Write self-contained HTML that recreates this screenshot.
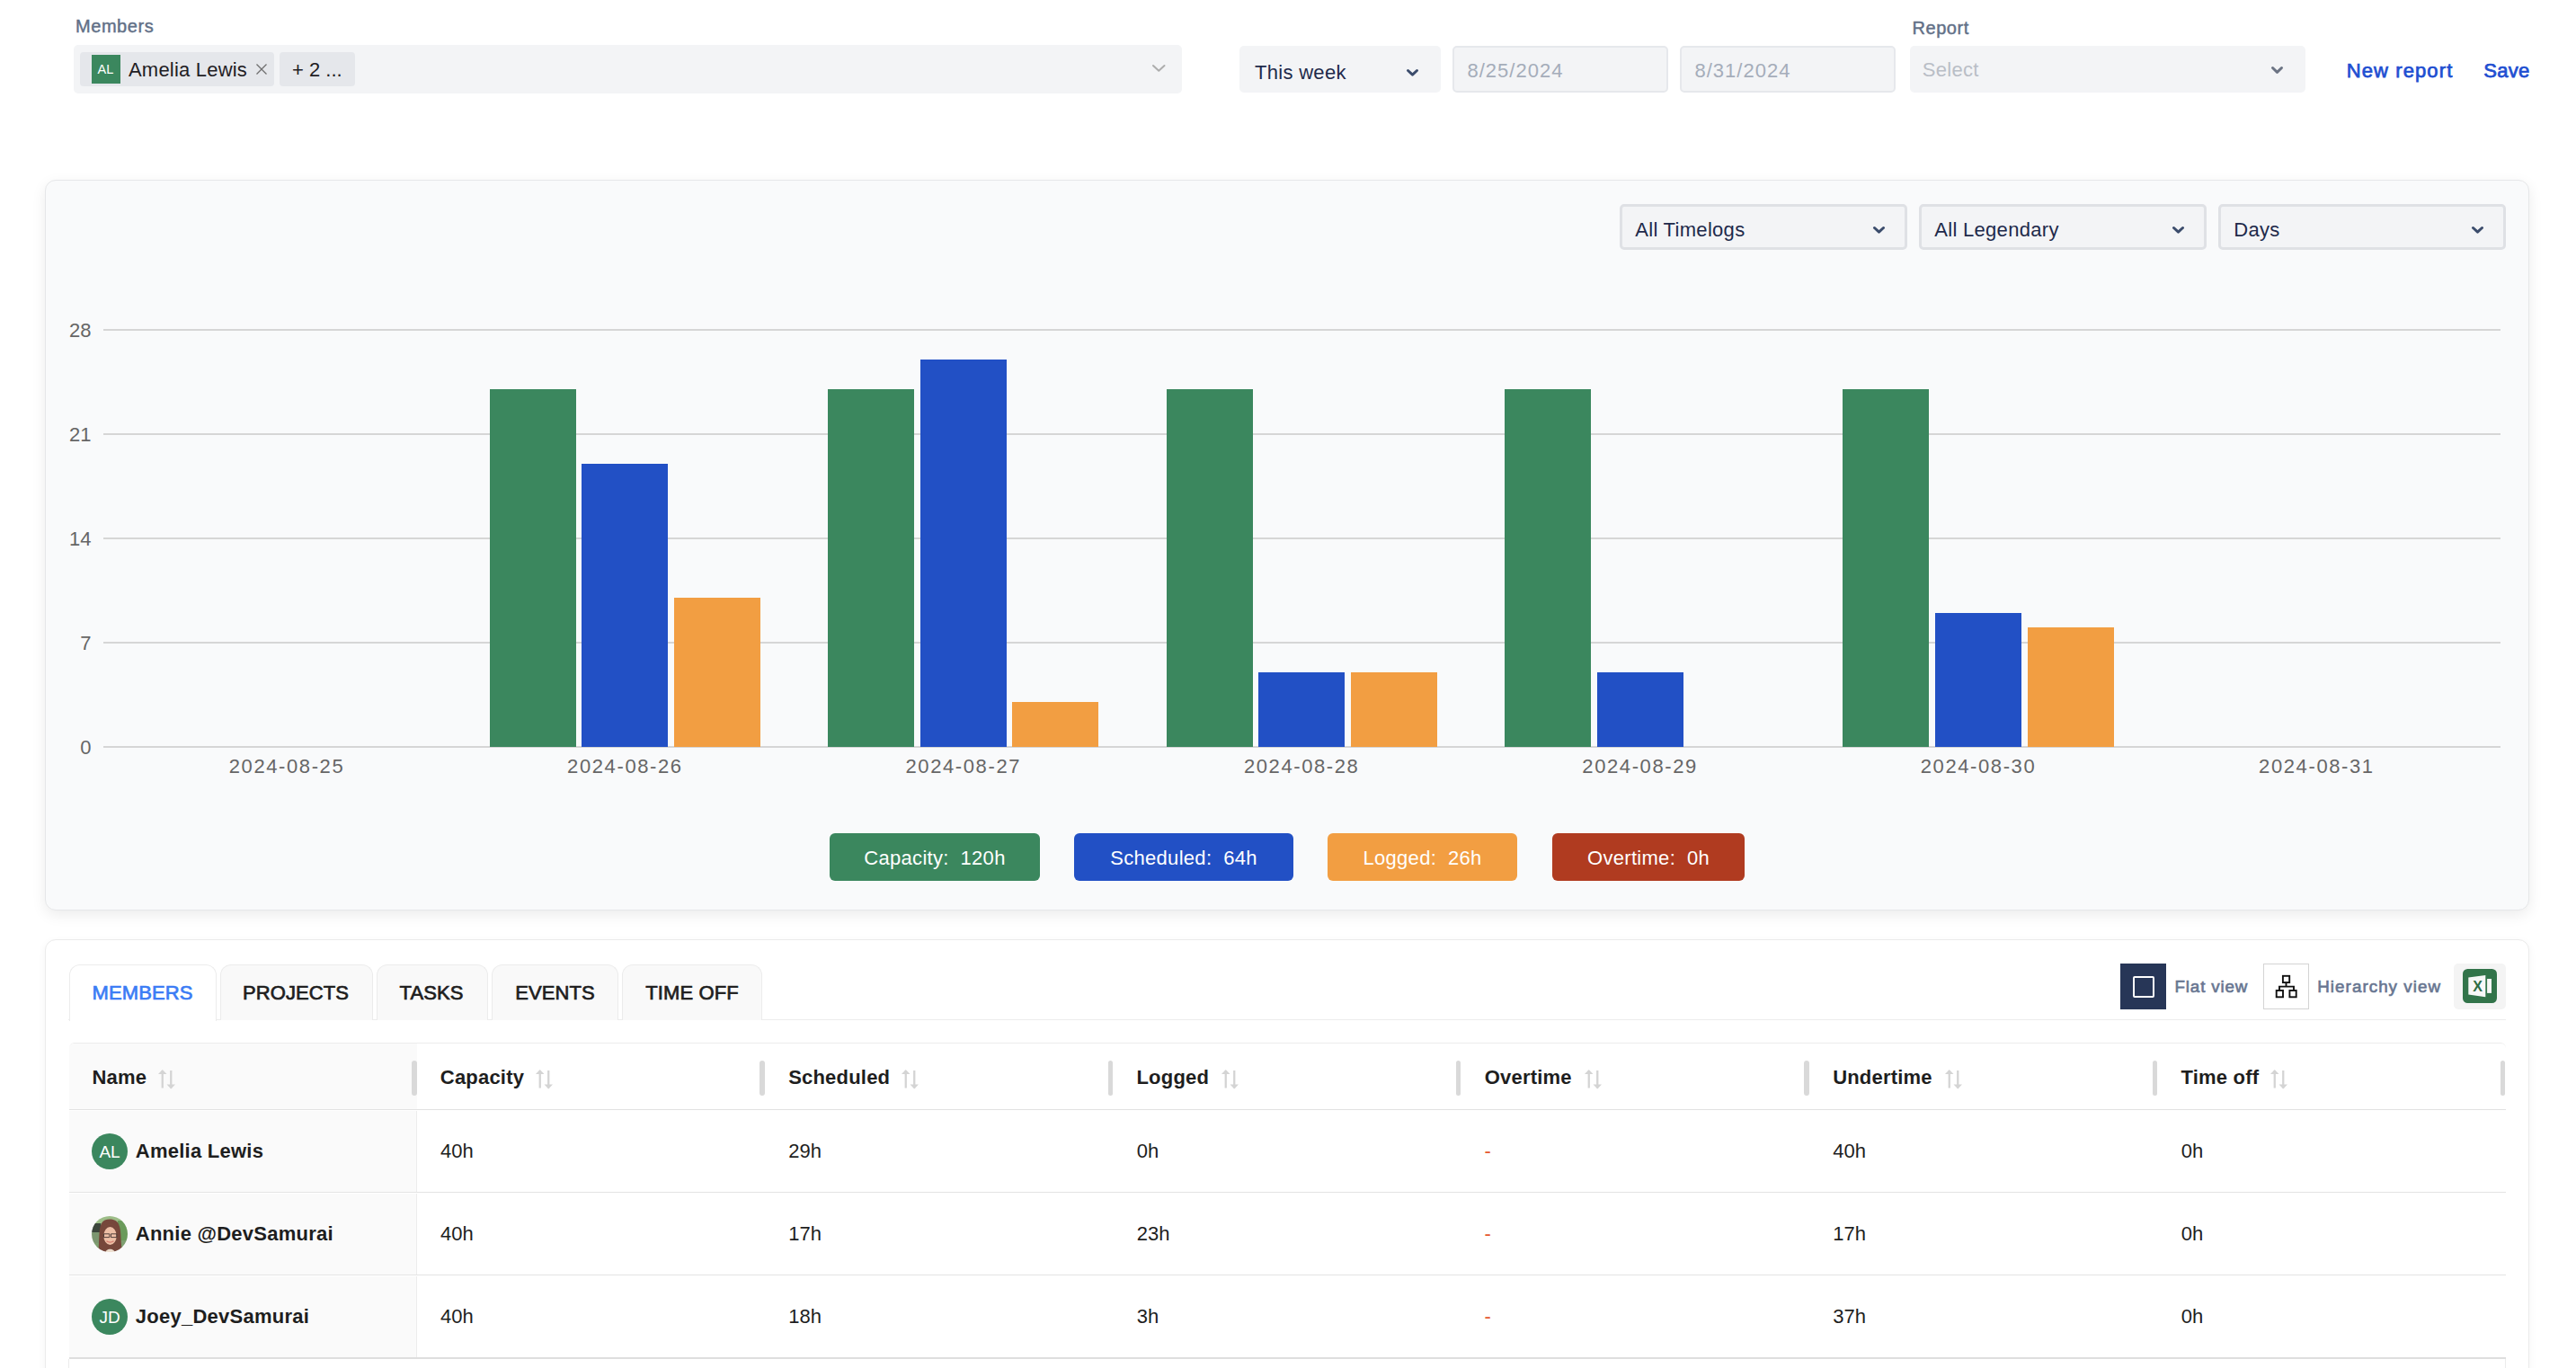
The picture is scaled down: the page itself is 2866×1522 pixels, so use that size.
<!DOCTYPE html>
<html><head><meta charset="utf-8"><style>
html,body{margin:0;padding:0;}
body{width:2866px;height:1522px;overflow:hidden;background:#fff;position:relative;font-family:"Liberation Sans", sans-serif;}
.t{position:absolute;white-space:pre;line-height:1;}
.b{position:absolute;box-sizing:border-box;}
</style></head><body>

<div class="t" style="left:84.00px;top:18.97px;font-size:20px;font-weight:400;color:#627087;letter-spacing:0.55px;-webkit-text-stroke:0.45px #627087;">Members</div>
<div class="b" style="left:82px;top:50px;width:1233px;height:54px;background:#f3f4f6;border-radius:5px;"></div>
<div class="b" style="left:89px;top:58px;width:216px;height:38px;background:#e5e7eb;border-radius:4px;"></div>
<div class="b" style="left:102px;top:61px;width:32px;height:32px;background:#3b875e;"></div>
<div class="t" style="left:108.50px;top:70.23px;font-size:14.5px;font-weight:400;color:#fff;letter-spacing:0px;">AL</div>
<div class="t" style="left:143.00px;top:67.38px;font-size:22px;font-weight:400;color:#1f2024;letter-spacing:0.2px;">Amelia Lewis</div>
<svg class="b" style="left:284px;top:70px;" width="14" height="14" viewBox="0 0 14 14"><path d="M1.5 1.5 L12.5 12.5 M12.5 1.5 L1.5 12.5" stroke="#6e6e6e" stroke-width="1.25" fill="none"/></svg>
<div class="b" style="left:311px;top:58px;width:84px;height:38px;background:#e5e7eb;border-radius:4px;"></div>
<div class="t" style="left:325.00px;top:67.38px;font-size:22px;font-weight:400;color:#1f2024;letter-spacing:0px;">+ 2 ...</div>
<svg class="b" style="left:1280px;top:69.8px;" width="18.5" height="11.799999999999997" viewBox="0 0 18.5 11.799999999999997"><polyline points="3.00,3.00 9.25,8.80 15.50,3.00" fill="none" stroke="#adadad" stroke-width="2" stroke-linecap="round" stroke-linejoin="round"/></svg>
<div class="b" style="left:1379px;top:51px;width:224px;height:52px;background:#f3f4f6;border-radius:5px;"></div>
<div class="t" style="left:1396.00px;top:70.38px;font-size:22px;font-weight:400;color:#1e2a4b;letter-spacing:0.3px;">This week</div>
<svg class="b" style="left:1561.5px;top:74.2px;" width="19.0" height="13.599999999999994" viewBox="0 0 19.0 13.599999999999994"><polyline points="4.50,4.50 9.50,9.10 14.50,4.50" fill="none" stroke="#3b4c6c" stroke-width="3" stroke-linecap="round" stroke-linejoin="round"/></svg>
<div class="b" style="left:1616px;top:51px;width:240px;height:52px;background:#f3f4f6;border:2px solid #e6e8ec;border-radius:5px;"></div>
<div class="t" style="left:1632.50px;top:67.63px;font-size:22px;font-weight:400;color:#a5adba;letter-spacing:1.0px;">8/25/2024</div>
<div class="b" style="left:1869px;top:51px;width:240px;height:52px;background:#f3f4f6;border:2px solid #e6e8ec;border-radius:5px;"></div>
<div class="t" style="left:1885.50px;top:67.63px;font-size:22px;font-weight:400;color:#a5adba;letter-spacing:1.0px;">8/31/2024</div>
<div class="t" style="left:2127.50px;top:20.67px;font-size:20px;font-weight:400;color:#627087;letter-spacing:0.55px;-webkit-text-stroke:0.45px #627087;">Report</div>
<div class="b" style="left:2125px;top:51px;width:440px;height:52px;background:#f3f4f6;border-radius:5px;"></div>
<div class="t" style="left:2138.75px;top:67.38px;font-size:22px;font-weight:400;color:#b9bec6;letter-spacing:0.3px;">Select</div>
<svg class="b" style="left:2523.5px;top:71px;" width="19.0" height="13.799999999999997" viewBox="0 0 19.0 13.799999999999997"><polyline points="4.50,4.50 9.50,9.30 14.50,4.50" fill="none" stroke="#6b7383" stroke-width="3" stroke-linecap="round" stroke-linejoin="round"/></svg>
<div class="t" style="left:2610.75px;top:67.88px;font-size:22px;font-weight:400;color:#1f4fd1;letter-spacing:1.1px;-webkit-text-stroke:0.75px #1f4fd1;">New report</div>
<div class="t" style="left:2763.25px;top:67.88px;font-size:22px;font-weight:400;color:#1f4fd1;letter-spacing:0.3px;-webkit-text-stroke:0.75px #1f4fd1;">Save</div>
<div class="b" style="left:50px;top:200px;width:2764px;height:813px;background:#f9fafb;border:1px solid #e6e7e9;border-radius:12px;box-shadow:0 5px 16px rgba(0,0,0,0.08);"></div>
<div class="b" style="left:1802px;top:227px;width:320px;height:51px;background:#f3f4f6;border:3px solid #dfe1e5;border-radius:5px;"></div>
<div class="t" style="left:1819.25px;top:244.63px;font-size:22px;font-weight:400;color:#1e2a4b;letter-spacing:0.3px;">All Timelogs</div>
<svg class="b" style="left:2080.75px;top:249.2px;" width="19.0" height="13.600000000000023" viewBox="0 0 19.0 13.600000000000023"><polyline points="4.50,4.50 9.50,9.10 14.50,4.50" fill="none" stroke="#3b4c6c" stroke-width="3" stroke-linecap="round" stroke-linejoin="round"/></svg>
<div class="b" style="left:2135px;top:227px;width:320px;height:51px;background:#f3f4f6;border:3px solid #dfe1e5;border-radius:5px;"></div>
<div class="t" style="left:2152.25px;top:244.63px;font-size:22px;font-weight:400;color:#1e2a4b;letter-spacing:0.3px;">All Legendary</div>
<svg class="b" style="left:2413.75px;top:249.2px;" width="19.0" height="13.600000000000023" viewBox="0 0 19.0 13.600000000000023"><polyline points="4.50,4.50 9.50,9.10 14.50,4.50" fill="none" stroke="#3b4c6c" stroke-width="3" stroke-linecap="round" stroke-linejoin="round"/></svg>
<div class="b" style="left:2468px;top:227px;width:320px;height:51px;background:#f3f4f6;border:3px solid #dfe1e5;border-radius:5px;"></div>
<div class="t" style="left:2485.25px;top:244.63px;font-size:22px;font-weight:400;color:#1e2a4b;letter-spacing:0.3px;">Days</div>
<svg class="b" style="left:2746.75px;top:249.2px;" width="19.0" height="13.600000000000023" viewBox="0 0 19.0 13.600000000000023"><polyline points="4.50,4.50 9.50,9.10 14.50,4.50" fill="none" stroke="#3b4c6c" stroke-width="3" stroke-linecap="round" stroke-linejoin="round"/></svg>
<div class="b" style="left:115px;top:366px;width:2667px;height:2px;background:#d6d6d6;"></div>
<div class="t" style="left:-398.50px;width:500px;text-align:right;top:356.54px;font-size:22px;font-weight:400;color:#666;letter-spacing:0px;">28</div>
<div class="b" style="left:115px;top:482px;width:2667px;height:2px;background:#d6d6d6;"></div>
<div class="t" style="left:-398.50px;width:500px;text-align:right;top:472.60px;font-size:22px;font-weight:400;color:#666;letter-spacing:0px;">21</div>
<div class="b" style="left:115px;top:598px;width:2667px;height:2px;background:#d6d6d6;"></div>
<div class="t" style="left:-398.50px;width:500px;text-align:right;top:588.66px;font-size:22px;font-weight:400;color:#666;letter-spacing:0px;">14</div>
<div class="b" style="left:115px;top:714px;width:2667px;height:2px;background:#d6d6d6;"></div>
<div class="t" style="left:-398.50px;width:500px;text-align:right;top:704.72px;font-size:22px;font-weight:400;color:#666;letter-spacing:0px;">7</div>
<div class="b" style="left:115px;top:830px;width:2667px;height:2px;background:#d6d6d6;"></div>
<div class="t" style="left:-398.50px;width:500px;text-align:right;top:820.78px;font-size:22px;font-weight:400;color:#666;letter-spacing:0px;">0</div>
<div class="t" style="left:-181.00px;width:1000px;text-align:center;top:841.63px;font-size:22px;font-weight:400;color:#666;letter-spacing:1.6px;">2024-08-25</div>
<div class="b" style="left:545px;top:433px;width:96px;height:398px;background:#3b875e;"></div>
<div class="b" style="left:647px;top:516px;width:96px;height:315px;background:#2250c5;"></div>
<div class="b" style="left:750px;top:665px;width:96px;height:166px;background:#f29e42;"></div>
<div class="t" style="left:195.40px;width:1000px;text-align:center;top:841.63px;font-size:22px;font-weight:400;color:#666;letter-spacing:1.6px;">2024-08-26</div>
<div class="b" style="left:921px;top:433px;width:96px;height:398px;background:#3b875e;"></div>
<div class="b" style="left:1024px;top:400px;width:96px;height:431px;background:#2250c5;"></div>
<div class="b" style="left:1126px;top:781px;width:96px;height:50px;background:#f29e42;"></div>
<div class="t" style="left:571.80px;width:1000px;text-align:center;top:841.63px;font-size:22px;font-weight:400;color:#666;letter-spacing:1.6px;">2024-08-27</div>
<div class="b" style="left:1298px;top:433px;width:96px;height:398px;background:#3b875e;"></div>
<div class="b" style="left:1400px;top:748px;width:96px;height:83px;background:#2250c5;"></div>
<div class="b" style="left:1503px;top:748px;width:96px;height:83px;background:#f29e42;"></div>
<div class="t" style="left:948.20px;width:1000px;text-align:center;top:841.63px;font-size:22px;font-weight:400;color:#666;letter-spacing:1.6px;">2024-08-28</div>
<div class="b" style="left:1674px;top:433px;width:96px;height:398px;background:#3b875e;"></div>
<div class="b" style="left:1777px;top:748px;width:96px;height:83px;background:#2250c5;"></div>
<div class="t" style="left:1324.60px;width:1000px;text-align:center;top:841.63px;font-size:22px;font-weight:400;color:#666;letter-spacing:1.6px;">2024-08-29</div>
<div class="b" style="left:2050px;top:433px;width:96px;height:398px;background:#3b875e;"></div>
<div class="b" style="left:2153px;top:682px;width:96px;height:149px;background:#2250c5;"></div>
<div class="b" style="left:2256px;top:698px;width:96px;height:133px;background:#f29e42;"></div>
<div class="t" style="left:1701.00px;width:1000px;text-align:center;top:841.63px;font-size:22px;font-weight:400;color:#666;letter-spacing:1.6px;">2024-08-30</div>
<div class="t" style="left:2077.40px;width:1000px;text-align:center;top:841.63px;font-size:22px;font-weight:400;color:#666;letter-spacing:1.6px;">2024-08-31</div>
<div class="b" style="left:923px;top:927px;width:234px;height:53px;background:#3b875e;border-radius:6px;"></div>
<div class="t" style="left:540.00px;width:1000px;text-align:center;top:943.98px;font-size:22px;font-weight:400;color:#fff;letter-spacing:0.3px;">Capacity:  120h</div>
<div class="b" style="left:1195px;top:927px;width:244px;height:53px;background:#2250c5;border-radius:6px;"></div>
<div class="t" style="left:817.00px;width:1000px;text-align:center;top:943.98px;font-size:22px;font-weight:400;color:#fff;letter-spacing:0.3px;">Scheduled:  64h</div>
<div class="b" style="left:1477px;top:927px;width:211px;height:53px;background:#f29e42;border-radius:6px;"></div>
<div class="t" style="left:1082.50px;width:1000px;text-align:center;top:943.98px;font-size:22px;font-weight:400;color:#fff;letter-spacing:0.3px;">Logged:  26h</div>
<div class="b" style="left:1727px;top:927px;width:214px;height:53px;background:#b03b20;border-radius:6px;"></div>
<div class="t" style="left:1334.00px;width:1000px;text-align:center;top:943.98px;font-size:22px;font-weight:400;color:#fff;letter-spacing:0.3px;">Overtime:  0h</div>
<div class="b" style="left:50px;top:1045px;width:2764px;height:600px;background:#fff;border:1px solid #ebebeb;border-radius:12px;box-shadow:0 3px 10px rgba(0,0,0,0.05);"></div>
<div class="b" style="left:76px;top:1134px;width:2712px;height:1px;background:#ececec;"></div>
<div class="b" style="left:76.5px;top:1072.5px;width:164px;height:63px;background:#fff;border:1px solid #ececec;border-bottom:none;border-radius:12px 12px 0 0;"></div>
<div class="t" style="left:102.50px;top:1094.38px;font-size:22px;font-weight:400;color:#3b7cf5;letter-spacing:0.1px;-webkit-text-stroke:0.7px #3b7cf5;">MEMBERS</div>
<div class="b" style="left:244.5px;top:1072.5px;width:170px;height:62px;background:#f9f9f9;border:1px solid #ececec;border-bottom:none;border-radius:12px 12px 0 0;"></div>
<div class="t" style="left:270.00px;top:1094.38px;font-size:22px;font-weight:400;color:#1e1e1e;letter-spacing:0.1px;-webkit-text-stroke:0.7px #1e1e1e;">PROJECTS</div>
<div class="b" style="left:418.5px;top:1072.5px;width:124px;height:62px;background:#f9f9f9;border:1px solid #ececec;border-bottom:none;border-radius:12px 12px 0 0;"></div>
<div class="t" style="left:444.50px;top:1094.38px;font-size:22px;font-weight:400;color:#1e1e1e;letter-spacing:0.1px;-webkit-text-stroke:0.7px #1e1e1e;">TASKS</div>
<div class="b" style="left:547px;top:1072.5px;width:140.5px;height:62px;background:#f9f9f9;border:1px solid #ececec;border-bottom:none;border-radius:12px 12px 0 0;"></div>
<div class="t" style="left:573.25px;top:1094.38px;font-size:22px;font-weight:400;color:#1e1e1e;letter-spacing:0.1px;-webkit-text-stroke:0.7px #1e1e1e;">EVENTS</div>
<div class="b" style="left:691.5px;top:1072.5px;width:156px;height:62px;background:#f9f9f9;border:1px solid #ececec;border-bottom:none;border-radius:12px 12px 0 0;"></div>
<div class="t" style="left:718.25px;top:1094.38px;font-size:22px;font-weight:400;color:#1e1e1e;letter-spacing:0.1px;-webkit-text-stroke:0.7px #1e1e1e;">TIME OFF</div>
<div class="b" style="left:2359px;top:1072px;width:51px;height:51px;background:#273657;"></div>
<div class="b" style="left:2373px;top:1086px;width:23.5px;height:23.5px;border:2.5px solid #fff;border-radius:2px;"></div>
<div class="t" style="left:2419.50px;top:1089.49px;font-size:18.8px;font-weight:400;color:#687691;letter-spacing:0.85px;-webkit-text-stroke:0.65px #687691;">Flat view</div>
<div class="b" style="left:2518px;top:1072px;width:51px;height:51px;background:#fff;border:1px solid #d4d4d4;"></div>
<svg class="b" style="left:2530px;top:1083px;" width="28" height="29" viewBox="0 0 28 29"><g fill="none" stroke="#111" stroke-width="1.9"><rect x="9.9" y="2.8" width="7.3" height="7.3"/><path d="M13.5 10.1 V14.6 M6 19 V14.6 H22 V19"/><rect x="2.7" y="19" width="7.3" height="7.3"/><rect x="17.4" y="19" width="7.3" height="7.3"/></g></svg>
<div class="t" style="left:2578.25px;top:1089.49px;font-size:18.8px;font-weight:400;color:#687691;letter-spacing:1.05px;-webkit-text-stroke:0.65px #687691;">Hierarchy view</div>
<div class="b" style="left:2730px;top:1072px;width:58px;height:51px;background:#f4f4f4;border-radius:5px;"></div>
<svg class="b" style="left:2740px;top:1078px;" width="38" height="38" viewBox="0 0 38 38"><rect x="0" y="0" width="38" height="38" rx="5.5" fill="#32744a"/><path d="M6.3 9.5 L25.3 7.1 V31.3 L6.3 28.6 Z" fill="#f7f7f7"/><rect x="27.1" y="11" width="4.9" height="15.9" fill="#f7f7f7"/><text x="16.6" y="24.9" font-family="Liberation Sans" font-weight="700" font-size="16" text-anchor="middle" fill="#2d6c43">X</text></svg>
<div class="b" style="left:76.5px;top:1160px;width:2711.5px;height:75px;background:#fff;border-top:1px solid #ececec;border-bottom:1px solid #e2e2e2;border-radius:6px 6px 0 0;"></div>
<div class="b" style="left:76.5px;top:1161px;width:387px;height:73px;background:#fafafa;border-radius:5px 0 0 0;"></div>
<div class="t" style="left:102.50px;top:1188.38px;font-size:22px;font-weight:700;color:#1e1e1e;letter-spacing:0.2px;">Name</div>
<svg class="b" style="left:175.5px;top:1189px;" width="20" height="23" viewBox="0 0 20 23"><g fill="#d4d4d4"><rect x="3.6" y="2" width="2.3" height="19.5"/><path d="M0 6 L4.75 1 L9.5 6 Z"/><rect x="13.1" y="2" width="2.3" height="19.5"/><path d="M9.5 17.5 L14.25 22.5 L19 17.5 Z"/></g></svg>
<div class="b" style="left:458.0px;top:1180px;width:5.5px;height:38.5px;background:#d9d9d9;border-radius:3px;"></div>
<div class="t" style="left:489.83px;top:1188.38px;font-size:22px;font-weight:700;color:#1e1e1e;letter-spacing:0.2px;">Capacity</div>
<svg class="b" style="left:596.3299999999999px;top:1189px;" width="20" height="23" viewBox="0 0 20 23"><g fill="#d4d4d4"><rect x="3.6" y="2" width="2.3" height="19.5"/><path d="M0 6 L4.75 1 L9.5 6 Z"/><rect x="13.1" y="2" width="2.3" height="19.5"/><path d="M9.5 17.5 L14.25 22.5 L19 17.5 Z"/></g></svg>
<div class="b" style="left:845.3299999999999px;top:1180px;width:5.5px;height:38.5px;background:#d9d9d9;border-radius:3px;"></div>
<div class="t" style="left:877.16px;top:1188.38px;font-size:22px;font-weight:700;color:#1e1e1e;letter-spacing:0.2px;">Scheduled</div>
<svg class="b" style="left:1002.9599999999999px;top:1189px;" width="20" height="23" viewBox="0 0 20 23"><g fill="#d4d4d4"><rect x="3.6" y="2" width="2.3" height="19.5"/><path d="M0 6 L4.75 1 L9.5 6 Z"/><rect x="13.1" y="2" width="2.3" height="19.5"/><path d="M9.5 17.5 L14.25 22.5 L19 17.5 Z"/></g></svg>
<div class="b" style="left:1232.6599999999999px;top:1180px;width:5.5px;height:38.5px;background:#d9d9d9;border-radius:3px;"></div>
<div class="t" style="left:1264.49px;top:1188.38px;font-size:22px;font-weight:700;color:#1e1e1e;letter-spacing:0.2px;">Logged</div>
<svg class="b" style="left:1358.74px;top:1189px;" width="20" height="23" viewBox="0 0 20 23"><g fill="#d4d4d4"><rect x="3.6" y="2" width="2.3" height="19.5"/><path d="M0 6 L4.75 1 L9.5 6 Z"/><rect x="13.1" y="2" width="2.3" height="19.5"/><path d="M9.5 17.5 L14.25 22.5 L19 17.5 Z"/></g></svg>
<div class="b" style="left:1619.99px;top:1180px;width:5.5px;height:38.5px;background:#d9d9d9;border-radius:3px;"></div>
<div class="t" style="left:1651.82px;top:1188.38px;font-size:22px;font-weight:700;color:#1e1e1e;letter-spacing:0.2px;">Overtime</div>
<svg class="b" style="left:1762.52px;top:1189px;" width="20" height="23" viewBox="0 0 20 23"><g fill="#d4d4d4"><rect x="3.6" y="2" width="2.3" height="19.5"/><path d="M0 6 L4.75 1 L9.5 6 Z"/><rect x="13.1" y="2" width="2.3" height="19.5"/><path d="M9.5 17.5 L14.25 22.5 L19 17.5 Z"/></g></svg>
<div class="b" style="left:2007.32px;top:1180px;width:5.5px;height:38.5px;background:#d9d9d9;border-radius:3px;"></div>
<div class="t" style="left:2039.15px;top:1188.38px;font-size:22px;font-weight:700;color:#1e1e1e;letter-spacing:0.2px;">Undertime</div>
<svg class="b" style="left:2163.95px;top:1189px;" width="20" height="23" viewBox="0 0 20 23"><g fill="#d4d4d4"><rect x="3.6" y="2" width="2.3" height="19.5"/><path d="M0 6 L4.75 1 L9.5 6 Z"/><rect x="13.1" y="2" width="2.3" height="19.5"/><path d="M9.5 17.5 L14.25 22.5 L19 17.5 Z"/></g></svg>
<div class="b" style="left:2394.6499999999996px;top:1180px;width:5.5px;height:38.5px;background:#d9d9d9;border-radius:3px;"></div>
<div class="t" style="left:2426.48px;top:1188.38px;font-size:22px;font-weight:700;color:#1e1e1e;letter-spacing:0.2px;">Time off</div>
<svg class="b" style="left:2526.48px;top:1189px;" width="20" height="23" viewBox="0 0 20 23"><g fill="#d4d4d4"><rect x="3.6" y="2" width="2.3" height="19.5"/><path d="M0 6 L4.75 1 L9.5 6 Z"/><rect x="13.1" y="2" width="2.3" height="19.5"/><path d="M9.5 17.5 L14.25 22.5 L19 17.5 Z"/></g></svg>
<div class="b" style="left:2781.98px;top:1180px;width:5.5px;height:38.5px;background:#d9d9d9;border-radius:3px;"></div>
<div class="b" style="left:76.5px;top:1235.5px;width:387px;height:91px;background:#fafafa;border-right:1px solid #ececec;"></div>
<div class="b" style="left:76.5px;top:1325.5px;width:2711.5px;height:1px;background:#e4e4e4;"></div>
<div class="b" style="left:102px;top:1261.0px;width:40px;height:40px;background:#3b875e;border-radius:50%;"></div>
<div class="t" style="left:-378.00px;width:1000px;text-align:center;top:1271.92px;font-size:19px;font-weight:400;color:#fff;letter-spacing:0px;">AL</div>
<div class="t" style="left:150.75px;top:1270.38px;font-size:22px;font-weight:700;color:#1e1e1e;letter-spacing:0.25px;">Amelia Lewis</div>
<div class="t" style="left:490.00px;top:1270.38px;font-size:22px;font-weight:400;color:#1e1e1e;letter-spacing:0px;">40h</div>
<div class="t" style="left:877.33px;top:1270.38px;font-size:22px;font-weight:400;color:#1e1e1e;letter-spacing:0px;">29h</div>
<div class="t" style="left:1264.66px;top:1270.38px;font-size:22px;font-weight:400;color:#1e1e1e;letter-spacing:0px;">0h</div>
<div class="t" style="left:1651.50px;top:1270.38px;font-size:22px;font-weight:400;color:#e4572e;letter-spacing:0px;">-</div>
<div class="t" style="left:2039.32px;top:1270.38px;font-size:22px;font-weight:400;color:#1e1e1e;letter-spacing:0px;">40h</div>
<div class="t" style="left:2426.65px;top:1270.38px;font-size:22px;font-weight:400;color:#1e1e1e;letter-spacing:0px;">0h</div>
<div class="b" style="left:76.5px;top:1327.5px;width:387px;height:91px;background:#fafafa;border-right:1px solid #ececec;"></div>
<div class="b" style="left:76.5px;top:1417.5px;width:2711.5px;height:1px;background:#e4e4e4;"></div>
<svg class="b" style="left:102px;top:1353.0px;" width="40" height="40" viewBox="0 0 40 40"><defs><clipPath id="cp"><circle cx="20" cy="20" r="20"/></clipPath><filter id="bl" x="-10%" y="-10%" width="120%" height="120%"><feGaussianBlur stdDeviation="0.75"/></filter></defs>
<g clip-path="url(#cp)"><g filter="url(#bl)"><rect x="-2" y="-2" width="44" height="44" fill="#7fa071"/><rect x="-2" y="-2" width="44" height="10" fill="#9dbd88"/><rect x="29" y="5" width="13" height="22" fill="#6a9a5a"/><rect x="-2" y="8" width="12" height="10" fill="#3a443a"/><rect x="-2" y="18" width="10" height="12" fill="#7b9670"/>
<path d="M7 42 C9 30 7 15 11 8 C14 2 27 2 30 9 C34 17 31 30 35 42 Z" fill="#76473a"/>
<ellipse cx="20.5" cy="22" rx="7.2" ry="10" fill="#edbfa6"/>
<path d="M12 19 C12 6 28 5 29 18 C27 12 24 10 20 10 C16 10 13 13 12 19 Z" fill="#7a4a3c"/>
<path d="M13.5 19.8 h6.3 v3.8 h-6.3 z M21.5 19.8 h6.3 v3.8 h-6.3 z" fill="none" stroke="#4a3a36" stroke-width="0.95"/>
<path d="M16.5 27.8 Q20.5 30.5 24.5 27.8" stroke="#d2776a" stroke-width="1.3" fill="none"/>
<path d="M15 42 C15 35 26 35 26 42 Z" fill="#ecdccc"/></g></g></svg>
<div class="t" style="left:150.75px;top:1362.38px;font-size:22px;font-weight:700;color:#1e1e1e;letter-spacing:0.25px;">Annie @DevSamurai</div>
<div class="t" style="left:490.00px;top:1362.38px;font-size:22px;font-weight:400;color:#1e1e1e;letter-spacing:0px;">40h</div>
<div class="t" style="left:877.33px;top:1362.38px;font-size:22px;font-weight:400;color:#1e1e1e;letter-spacing:0px;">17h</div>
<div class="t" style="left:1264.66px;top:1362.38px;font-size:22px;font-weight:400;color:#1e1e1e;letter-spacing:0px;">23h</div>
<div class="t" style="left:1651.50px;top:1362.38px;font-size:22px;font-weight:400;color:#e4572e;letter-spacing:0px;">-</div>
<div class="t" style="left:2039.32px;top:1362.38px;font-size:22px;font-weight:400;color:#1e1e1e;letter-spacing:0px;">17h</div>
<div class="t" style="left:2426.65px;top:1362.38px;font-size:22px;font-weight:400;color:#1e1e1e;letter-spacing:0px;">0h</div>
<div class="b" style="left:76.5px;top:1419.5px;width:387px;height:91px;background:#fafafa;border-right:1px solid #ececec;"></div>
<div class="b" style="left:76.5px;top:1510.0px;width:2711.5px;height:2px;background:#dedede;"></div>
<div class="b" style="left:102px;top:1445.0px;width:40px;height:40px;background:#3b875e;border-radius:50%;"></div>
<div class="t" style="left:-378.00px;width:1000px;text-align:center;top:1455.92px;font-size:19px;font-weight:400;color:#fff;letter-spacing:0px;">JD</div>
<div class="t" style="left:150.75px;top:1454.38px;font-size:22px;font-weight:700;color:#1e1e1e;letter-spacing:0.25px;">Joey_DevSamurai</div>
<div class="t" style="left:490.00px;top:1454.38px;font-size:22px;font-weight:400;color:#1e1e1e;letter-spacing:0px;">40h</div>
<div class="t" style="left:877.33px;top:1454.38px;font-size:22px;font-weight:400;color:#1e1e1e;letter-spacing:0px;">18h</div>
<div class="t" style="left:1264.66px;top:1454.38px;font-size:22px;font-weight:400;color:#1e1e1e;letter-spacing:0px;">3h</div>
<div class="t" style="left:1651.50px;top:1454.38px;font-size:22px;font-weight:400;color:#e4572e;letter-spacing:0px;">-</div>
<div class="t" style="left:2039.32px;top:1454.38px;font-size:22px;font-weight:400;color:#1e1e1e;letter-spacing:0px;">37h</div>
<div class="t" style="left:2426.65px;top:1454.38px;font-size:22px;font-weight:400;color:#1e1e1e;letter-spacing:0px;">0h</div>
<div class="b" style="left:76px;top:1512px;width:1px;height:10px;background:#ececec;"></div>
<div class="b" style="left:2787px;top:1512px;width:1px;height:10px;background:#ececec;"></div>
</body></html>
